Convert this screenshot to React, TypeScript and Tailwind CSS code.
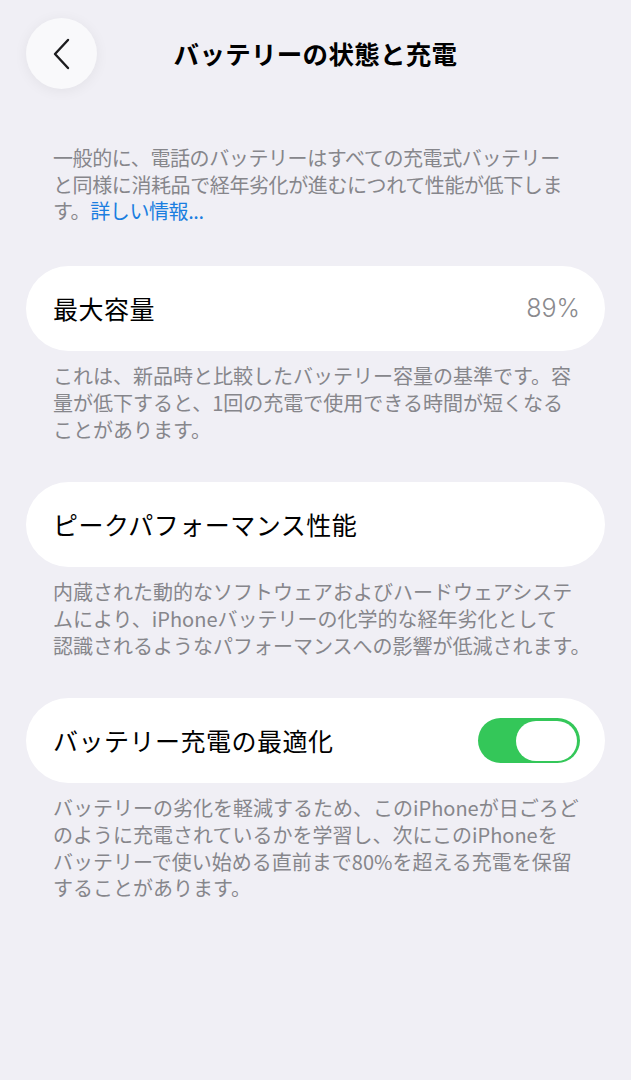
import React from "react";

const font = { fontFamily: '"Noto Sans CJK JP", "Noto Sans", sans-serif' };

function Footer({ lines }: { lines: React.ReactNode[] }) {
  return (
    <div className="px-[53px] pt-[12px] text-[20px] leading-[26.7px] text-[#86868b]">
      {lines.map((l, i) => (
        <div key={i} className="whitespace-nowrap">
          {l}
        </div>
      ))}
    </div>
  );
}

function Row({ children }: { children: React.ReactNode }) {
  return (
    <div className="mx-[26px] h-[85px] rounded-full bg-white pl-[27px] pr-[25px] flex items-center justify-between">
      {children}
    </div>
  );
}

function Toggle() {
  return (
    <div className="w-[102px] h-[45px] rounded-full bg-[#34c759] flex items-center justify-end pr-[3px]">
      <div className="w-[61px] h-[40px] rounded-full bg-white" />
    </div>
  );
}

export default function App() {
  return (
    <div className="min-h-[1080px] w-full bg-[#f0eff5] text-black" style={font}>
      <header className="relative h-[108px] flex items-start justify-center">
        <button className="absolute left-[26px] top-[18px] w-[71px] h-[71px] rounded-full bg-[#f9f9fb] shadow-[0_2px_14px_rgba(0,0,0,0.06)] flex items-center justify-center">
          <svg width="18" height="32" viewBox="0 0 18 32" fill="none" className="-ml-[2px]">
            <path d="M16 2 L3 16 L16 30" stroke="#1c1c1e" strokeWidth="2.4" strokeLinecap="round" strokeLinejoin="round" />
          </svg>
        </button>
        <h1 className="mt-[36px] text-[25.5px] leading-[34px] font-bold tracking-[0.3px]">バッテリーの状態と充電</h1>
      </header>

      <div className="px-[53px] pt-[37px] text-[20px] leading-[26.7px] text-[#86868b] tracking-[-0.4px]">
        <div className="whitespace-nowrap">一般的に、電話のバッテリーはすべての充電式バッテリー</div>
        <div className="whitespace-nowrap">と同様に消耗品で経年劣化が進むにつれて性能が低下しま</div>
        <div className="whitespace-nowrap">
          す。<span className="text-[#1a7ee0]">詳しい情報...</span>
        </div>
      </div>

      <div className="mt-[41px]">
        <Row>
          <span className="text-[25px] tracking-[0.5px]">最大容量</span>
          <span className="text-[25px] font-light text-[#8a8a8e]" style={{ fontFamily: '"Inter", "Noto Sans", sans-serif' }}>89%</span>
        </Row>
        <Footer
          lines={[
            "これは、新品時と比較したバッテリー容量の基準です。容",
            "量が低下すると、1回の充電で使用できる時間が短くなる",
            "ことがあります。",
          ]}
        />
      </div>

      <div className="mt-[39px]">
        <Row>
          <span className="text-[25px] tracking-[0.5px]">ピークパフォーマンス性能</span>
        </Row>
        <Footer
          lines={[
            "内蔵された動的なソフトウェアおよびハードウェアシステ",
            "ムにより、iPhoneバッテリーの化学的な経年劣化として",
            "認識されるようなパフォーマンスへの影響が低減されます。",
          ]}
        />
      </div>

      <div className="mt-[39px]">
        <Row>
          <span className="text-[25px] tracking-[0.5px]">バッテリー充電の最適化</span>
          <Toggle />
        </Row>
        <Footer
          lines={[
            "バッテリーの劣化を軽減するため、このiPhoneが日ごろど",
            "のように充電されているかを学習し、次にこのiPhoneを",
            "バッテリーで使い始める直前まで80%を超える充電を保留",
            "することがあります。",
          ]}
        />
      </div>
    </div>
  );
}
